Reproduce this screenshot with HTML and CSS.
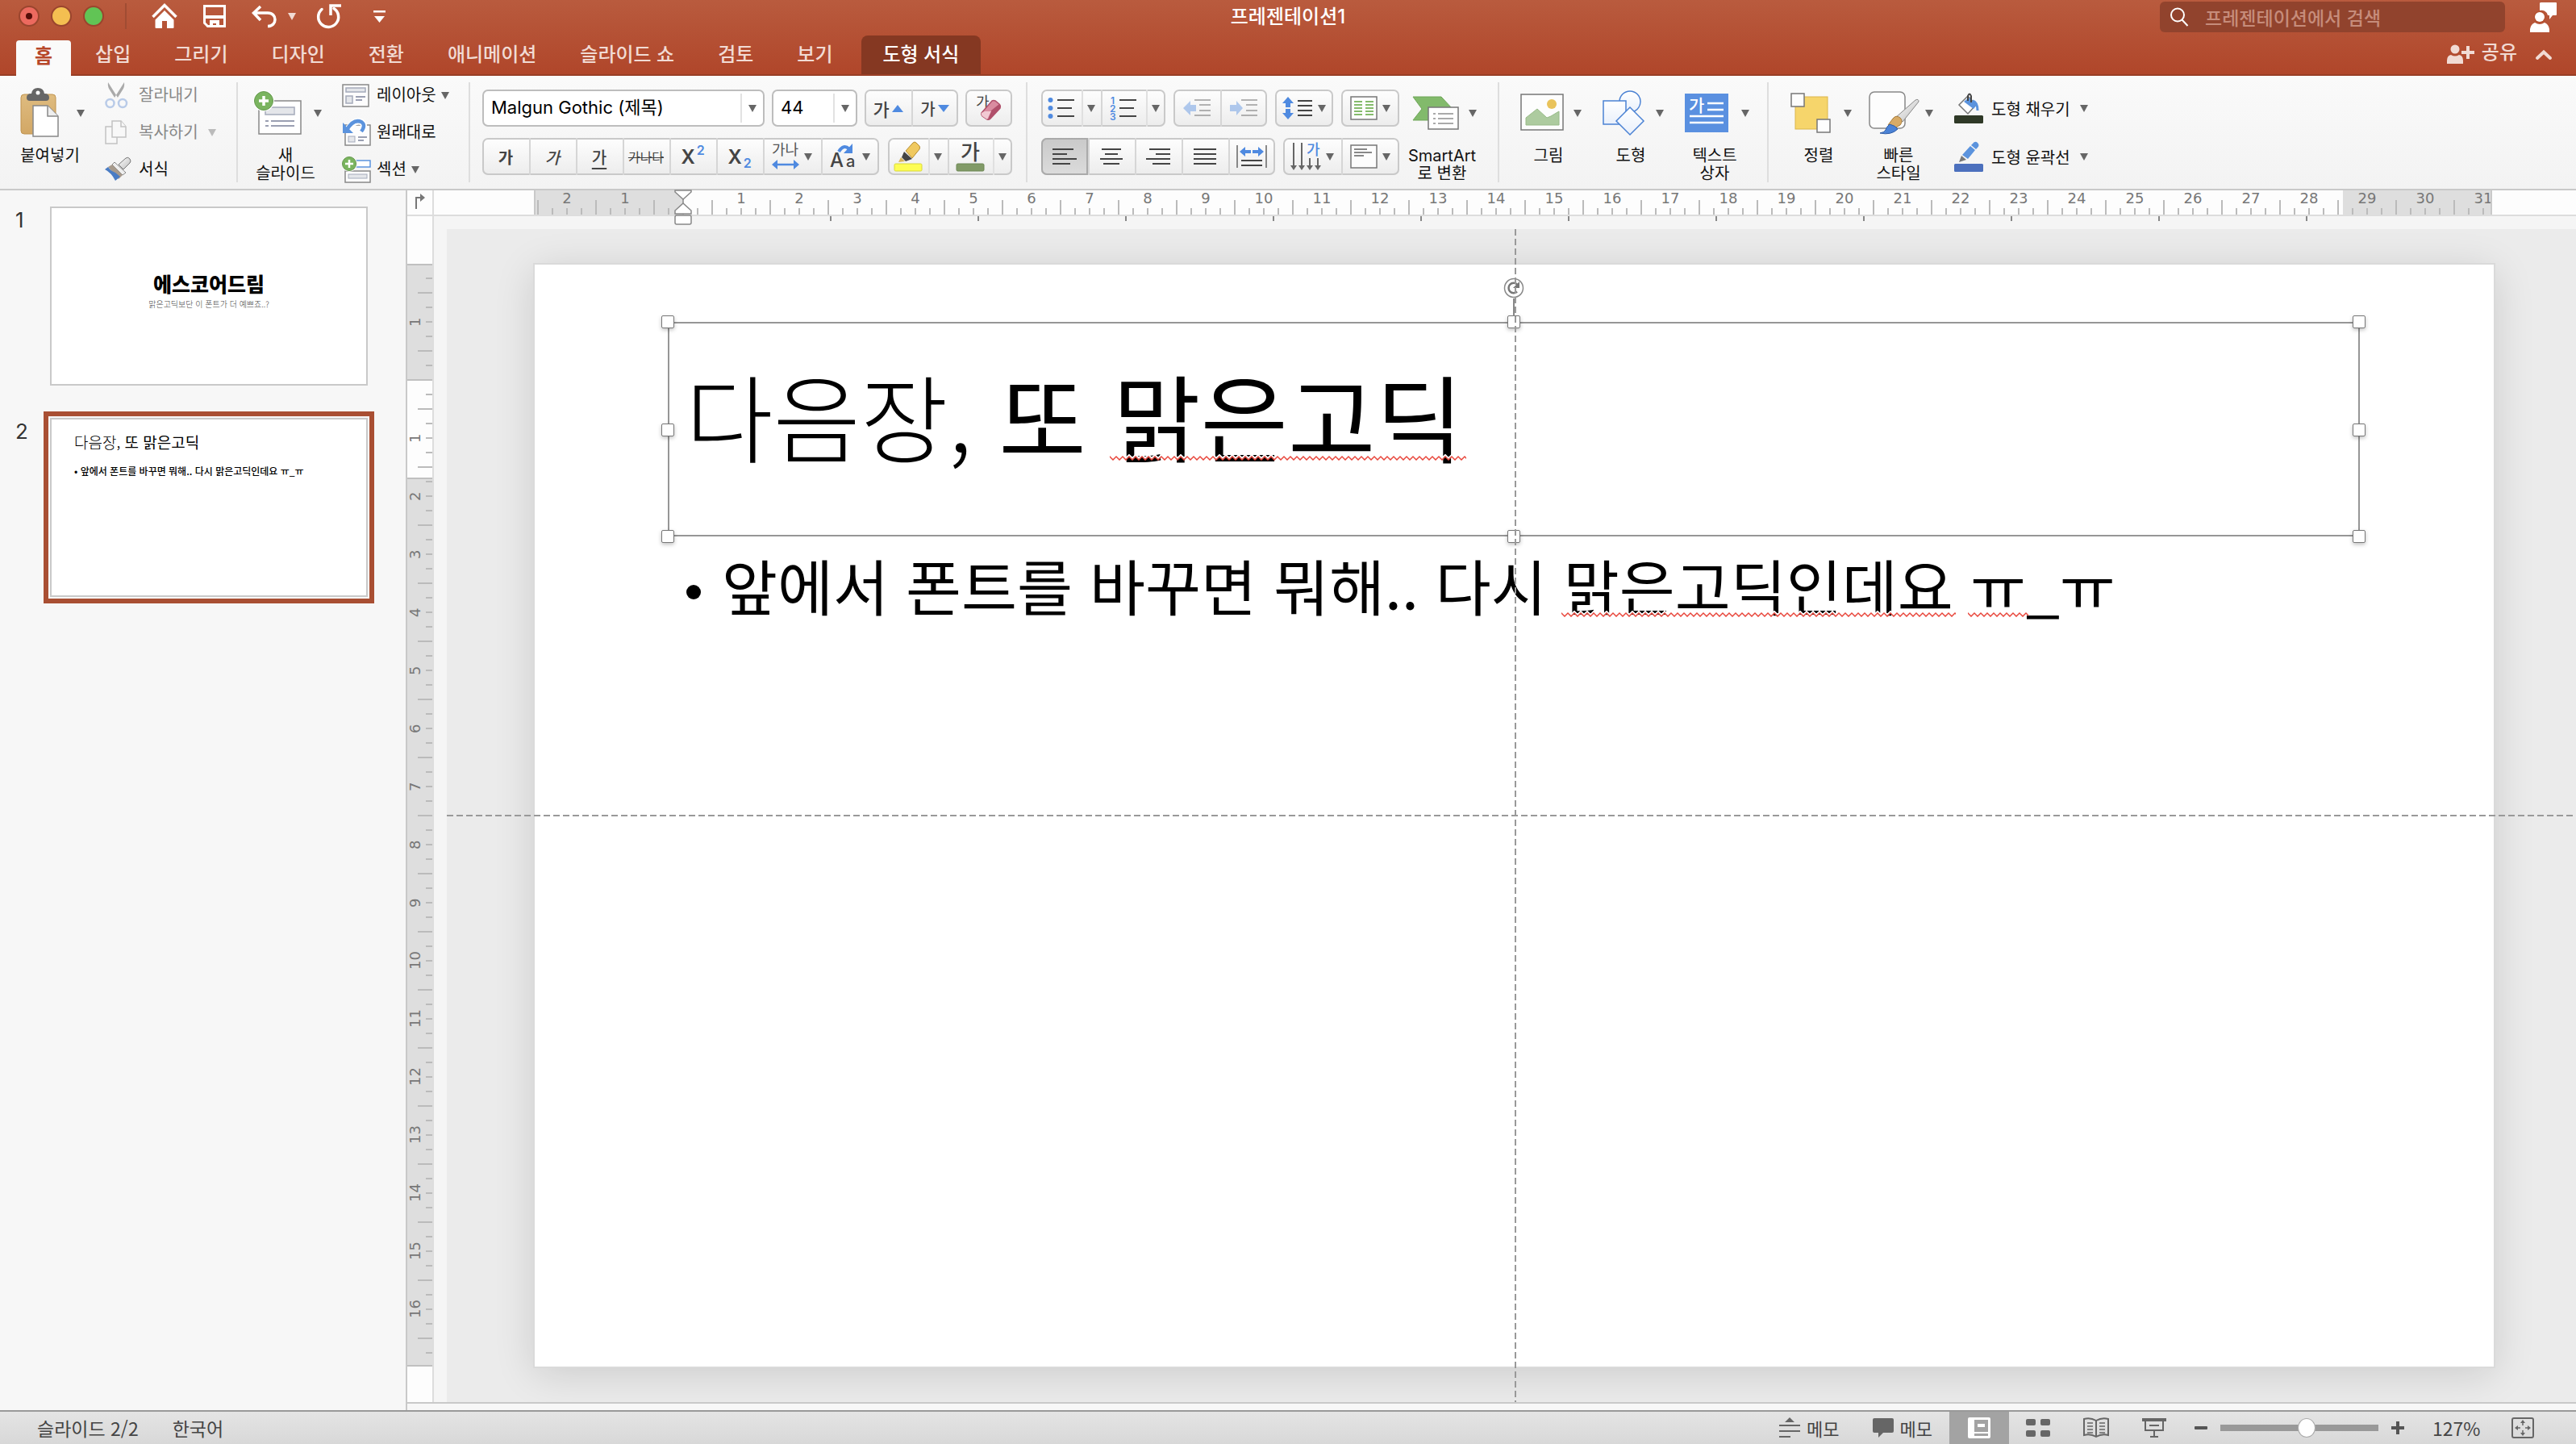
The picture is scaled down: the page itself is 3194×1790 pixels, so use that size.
FILE: index.html
```html
<!DOCTYPE html>
<html lang="ko">
<head>
<meta charset="utf-8">
<title>프레젠테이션1</title>
<link rel="stylesheet" href="styles.css">
</head>
<body>
<svg class="defs" aria-hidden="true">
  <defs>
    <symbol id="caret" viewBox="0 0 10 9"><path d="M0 0h10L5 9z" fill="currentColor"/></symbol>
    <linearGradient id="shapeFill" x1="0" y1="0" x2="0" y2="1"><stop offset="0" stop-color="#fff"/><stop offset="1" stop-color="#e9f0fb"/></linearGradient>
    <linearGradient id="boardFill" x1="0" y1="0" x2="0" y2="1"><stop offset="0" stop-color="#dfbc80"/><stop offset="1" stop-color="#d2a765"/></linearGradient>
    <linearGradient id="metal" x1="0" y1="0" x2="1" y2="1"><stop offset="0" stop-color="#fff"/><stop offset="1" stop-color="#bbb"/></linearGradient>
  </defs>
</svg>

<header class="top">
  <div class="titlebar">
    <div class="lights">
      <button class="light red" aria-label="닫기"></button>
      <button class="light yellow" aria-label="최소화"></button>
      <button class="light green" aria-label="확대"></button>
    </div>
    <div class="quick">
      <button aria-label="홈"><svg width="32" height="32" viewBox="0 0 32 32"><path d="M1.500 17L16 2.500 30.500 17" fill="none" stroke="#fff" stroke-width="3.500"/><path d="M16 9L4.500 20.500V30q0 1 1 1H13V22h6v9h7.500q1 0 1-1V20.500z" fill="#fff"/></svg></button>
      <button aria-label="저장"><svg width="28" height="28" viewBox="0 0 28 28"><path d="M1.500 1.500h25v25h-21l-4-4z" fill="none" stroke="#fff" stroke-width="3"/><path d="M1 13h26v4H1z" fill="#fff"/><path d="M8 28v-9h12v9h-4v-5h-4v5z" fill="#fff"/></svg></button>
      <button aria-label="실행 취소" class="undo"><svg width="31" height="28" viewBox="0 0 31 28"><path d="M11 2L2.500 10l8.500 9M3 10h17c12 0 12 16.500 0 16.500" fill="none" stroke="#fff" stroke-width="3.500"/></svg><svg class="caret" width="10" height="9"><use href="#caret"/></svg></button>
      <button aria-label="다시 실행"><svg width="30" height="30" viewBox="0 0 30 30"><path d="M6 6.500A12.500 12.500 0 1 0 21 5.500" fill="none" stroke="#fff" stroke-width="3.500" stroke-linecap="round"/><path d="M17 14V2h13" fill="none" stroke="#fff" stroke-width="3.500"/></svg></button>
      <button aria-label="도구 모음 사용자 지정"><svg width="15" height="15" viewBox="0 0 15 15"><path d="M0 0h15v2.500H0zM1 7h13l-6.500 8z" fill="#fff"/></svg></button>
    </div>
    <h1>프레젠테이션1</h1>
    <div class="right">
      <label class="search">
        <svg width="24" height="24" viewBox="0 0 24 24" fill="none" stroke="#fff" stroke-width="2"><circle cx="10" cy="9.500" r="8"/><path d="M15.500 15.500L22.500 23"/></svg>
        <input type="text" placeholder="프레젠테이션에서 검색" aria-label="프레젠테이션에서 검색">
      </label>
      <button aria-label="의견"><svg width="36" height="37" viewBox="0 0 36 37" fill="#fff"><path d="M15 0h18q1 0 1 1v14q0 1-1 1h-4l-4 5v-5h-2a8 8 0 0 0-10-6V1q0-1 2-1z"/><circle cx="13" cy="18" r="7.500" fill="#b4502f"/><circle cx="13" cy="18" r="6"/><path d="M1 37v-4q1-6 6-8 6 4 12 0 5 2 6 8v4z"/></svg></button>
    </div>
  </div>
  <nav class="tabs">
    <a href="#" class="tab on">홈</a><a href="#" class="tab">삽입</a><a href="#" class="tab">그리기</a><a href="#" class="tab">디자인</a><a href="#" class="tab">전환</a><a href="#" class="tab">애니메이션</a><a href="#" class="tab">슬라이드 쇼</a><a href="#" class="tab">검토</a><a href="#" class="tab">보기</a><a href="#" class="tab context">도형 서식</a>
    <button class="share"><svg width="34" height="24" viewBox="0 0 34 24" fill="#f1dbd4"><circle cx="10" cy="6" r="5.500"/><path d="M0 24v-4q0-6 5-7 5 3 10 0 5 1 5 7v4zM24 2h4v6h6v4h-6v6h-4v-6h-6V8h6z"/></svg>공유</button>
    <button class="collapse" aria-label="리본 축소"><svg width="20" height="12" viewBox="0 0 20 12"><path d="M2 10l8-7.500 8 7.500" fill="none" stroke="#f1dbd4" stroke-width="4" stroke-linecap="round"/></svg></button>
  </nav>
</header>

<section class="ribbon">
  <div class="group g-clip">
    <button class="big w80">
      <span class="pic"><svg width="48" height="62" viewBox="0 0 48 62"><rect x="1" y="8" width="43" height="49" rx="4" fill="url(#boardFill)" stroke="#c09450"/><path d="M12 16q-4 0-4-4 0-5 6-5 1-7 8-7t8 7q6 0 6 5 0 4-4 4z" fill="#666"/><circle cx="22" cy="6" r="2.500" fill="#fff"/><path d="M16 22h18l13 13v25H16z" fill="#fff" stroke="#888" stroke-width="1.500"/><path d="M34 22v13h13" fill="#eee" stroke="#888" stroke-width="1.500"/></svg><svg class="caret" width="10" height="9"><use href="#caret"/></svg></span>
      <span class="lab">붙여넣기</span>
    </button>
    <div class="col w138">
      <button class="small off"><span class="ico"><svg width="28" height="32" viewBox="0 0 28 32"><path d="M4 0q-1 6 3 11l7 11 2-3zM24 0q1 6-3 11l-7 11-2-3z" fill="#aaa"/><circle cx="6.500" cy="26" r="5" fill="none" stroke="#b9cbe8" stroke-width="2.500"/><circle cx="22" cy="26" r="5" fill="none" stroke="#b9cbe8" stroke-width="2.500"/></svg></span>잘라내기</button>
      <button class="small off"><span class="ico"><svg width="28" height="30" viewBox="0 0 28 30" fill="#f8f8f8" stroke="#c2c2c2" stroke-width="1.500"><path d="M1 8h14v21H1z"/><path d="M9 1h11l6 7v13H9z"/><path d="M20 1v7h6"/></svg></span>복사하기<svg class="caret gap" width="10" height="9"><use href="#caret"/></svg></button>
      <button class="small"><span class="ico"><svg width="32" height="30" viewBox="0 0 32 30"><path d="M17 9l9-8q3-2 5 1t0 5l-8 8z" fill="url(#metal)" stroke="#777"/><path d="M12 6l14 13-4 3L9 9z" fill="#eee" stroke="#888"/><path d="M9 9l13 13-5 5L4 12z" fill="#a79a8c"/><path d="M4 12l-4 3q8 4 13 14l6-5-6-5q-6-2-9-7z" fill="#4a7cc4"/></svg></span>서식</button>
    </div>
  </div>

  <div class="group g-slides">
    <button class="big w84">
      <span class="pic"><svg width="59" height="54" viewBox="0 0 59 54"><rect x="6" y="12" width="52" height="41" fill="#fff" stroke="#888" stroke-width="1.500"/><rect x="14" y="20" width="36" height="9" fill="#e4e6ea" stroke="#a5abbb" stroke-width="1.500"/><path d="M14 37h4M21 37h29M14 43h4M21 43h29" stroke="#9a9fb2" stroke-width="2"/><circle cx="12" cy="12" r="13" fill="#fff"/><circle cx="12" cy="12" r="11.500" fill="#7ab45f" stroke="#66994f"/><path d="M12 6v12M6 12h12" stroke="#fff" stroke-width="3.500"/></svg><svg class="caret" width="10" height="9"><use href="#caret"/></svg></span>
      <span class="lab">새<br>슬라이드</span>
    </button>
    <div class="col w132">
      <button class="small"><span class="ico wide"><svg width="34" height="29" viewBox="0 0 34 29" fill="#fdfdfd" stroke="#888" stroke-width="1.500"><rect x="1" y="1" width="32" height="27"/><g fill="#e4e6ea" stroke="#a5abbb"><rect x="5" y="5" width="24" height="5"/><rect x="5" y="15" width="8" height="9"/></g><path d="M17 16h12M17 20h8" stroke="#9a9fb2" stroke-width="2"/></svg></span>레이아웃<svg class="caret near" width="10" height="9"><use href="#caret"/></svg></button>
      <button class="small"><span class="ico wide"><svg width="36" height="34" viewBox="0 0 36 34"><rect x="4" y="8" width="31" height="25" fill="#fdfdfd" stroke="#888" stroke-width="1.500"/><rect x="8" y="22" width="8" height="7" fill="#e4e6ea" stroke="#a5abbb"/><path d="M20 23h11M20 27h7" stroke="#9a9fb2" stroke-width="2"/><path d="M1 5v13h13z" fill="#5b93dd"/><path d="M8 12q8-11 16-8 6 4 0 12" fill="none" stroke="#fff" stroke-width="8"/><path d="M6 14q8-14 18-10 6 4 0 12" fill="none" stroke="#5b93dd" stroke-width="4.500"/></svg></span>원래대로</button>
      <button class="small"><span class="ico wide"><svg width="36" height="33" viewBox="0 0 36 33"><rect x="12" y="5" width="23" height="8" fill="#fff" stroke="#5b93dd" stroke-width="1.500"/><rect x="4" y="18" width="31" height="14" fill="#fdfdfd" stroke="#888" stroke-width="1.500"/><rect x="8" y="22" width="23" height="5" fill="#e4e6ea" stroke="#a5abbb"/><circle cx="9" cy="9" r="10" fill="#f6f6f6"/><circle cx="9" cy="9" r="8.500" fill="#7ab45f" stroke="#66994f"/><path d="M9 4v10M4 9h10" stroke="#fff" stroke-width="2.500"/></svg></span>섹션<svg class="caret near" width="10" height="9"><use href="#caret"/></svg></button>
    </div>
  </div>

  <div class="group g-font">
    <div class="rows">
      <div class="row between">
        <label class="combo font-name"><select aria-label="글꼴"><option>Malgun Gothic (제목)</option></select><svg class="caret" width="10" height="9"><use href="#caret"/></svg></label>
        <label class="combo font-size"><select aria-label="글꼴 크기"><option>44</option></select><svg class="caret" width="10" height="9"><use href="#caret"/></svg></label>
        <div class="seg"><button class="w58 k22 tight">가<svg width="14" height="9" viewBox="0 0 14 9"><path d="M0 9h14L7 0z" fill="#4f8ae0"/></svg></button><button class="w58 k20 tight">가<svg width="14" height="9" viewBox="0 0 14 9"><path d="M0 0h14L7 9z" fill="#4f8ae0"/></svg></button></div>
        <div class="seg"><button class="w58" aria-label="서식 지우기"><svg width="32" height="36" viewBox="0 0 32 36"><text x="0" y="17" font-size="18" fill="#444">가</text><path d="M7 24L20 9q2-1 4 0l5 4q2 2 1 5L18 31q-2 2-4 1l-6-4q-2-2-1-4z" fill="#d98ca0" stroke="#b0506b" stroke-width="1.500"/><path d="M15 32l4-11 10-8q2 2 1 5L18 31z" fill="#b0506b"/><path d="M7 24l4-2 8 0-5 10-6-4q-2-2-1-4z" fill="#f2c9d3"/></svg></button></div>
      </div>
      <div class="row between">
        <div class="seg">
          <button class="w58 k20 b">가</button><button class="w58 k20 i">가</button><button class="w58 k20 u">가</button><button class="w58 k16 s">가나다</button><button class="w58 script">X<sup>2</sup></button><button class="w58 script">X<sub>2</sub></button>
          <button class="w72" aria-label="문자 간격"><svg width="34" height="34" viewBox="0 0 34 34"><text x="0" y="15" font-size="18" fill="#555">가나</text><path d="M5 27h24" stroke="#4f8ae0" stroke-width="2.500"/><path d="M7 21v12l-7-6zM27 21v12l7-6z" fill="#4f8ae0"/></svg><svg class="caret" width="10" height="9"><use href="#caret"/></svg></button><button class="w72" aria-label="대/소문자 바꾸기"><svg width="34" height="34" viewBox="0 0 34 34"><text x="0" y="30" font-size="24" font-weight="500" fill="#444">A</text><text x="20" y="30" font-size="20" font-weight="500" fill="#444">a</text><path d="M11 11q6-10 13-3" fill="none" stroke="#4f8ae0" stroke-width="4"/><path d="M28 1v12H17z" fill="#4f8ae0"/></svg><svg class="caret" width="10" height="9"><use href="#caret"/></svg></button>
        </div>
        <div class="seg">
          <button class="w50" aria-label="강조 색"><svg width="36" height="38" viewBox="0 0 36 38"><path d="M15 12L24 2q2-2 4 0l4 4q1 2 0 4l-9 11z" fill="#f0c95f" stroke="#b58d32"/><path d="M13 13l10 9-8 3-5-5z" fill="#444"/><path d="M9 20l5 5-8 1z" fill="#d9b45a"/><rect x="1" y="28" width="34" height="9" rx="1.500" fill="#fdfd54" stroke="#d8d83a"/></svg></button><button class="w24 slim" aria-label="강조 색 목록"><svg class="caret" width="10" height="9"><use href="#caret"/></svg></button><button class="w56" aria-label="글꼴 색"><svg width="36" height="38" viewBox="0 0 36 38"><text x="6" y="23" font-size="26" font-weight="500" fill="#444">가</text><rect x="1" y="28" width="34" height="9" rx="1.500" fill="#819a67" stroke="#6d8755"/></svg></button><button class="w24 slim" aria-label="글꼴 색 목록"><svg class="caret" width="10" height="9"><use href="#caret"/></svg></button>
        </div>
      </div>
    </div>
  </div>

  <div class="group g-para">
    <div class="rows">
      <div class="row">
        <div class="seg">
          <button class="w50" aria-label="글머리 기호"><svg width="34" height="28" viewBox="0 0 34 28"><g fill="#4f8ae0"><circle cx="3.500" cy="4" r="3"/><circle cx="3.500" cy="14" r="3"/><circle cx="3.500" cy="24" r="3"/></g><path d="M12 4h21M12 14h18M12 24h21" stroke="#444" stroke-width="2"/></svg></button><button class="w24 slim" aria-label="글머리 기호 목록"><svg class="caret" width="10" height="9"><use href="#caret"/></svg></button><button class="w56" aria-label="번호 매기기"><svg width="34" height="32" viewBox="0 0 34 32"><g fill="#4f8ae0" font-size="12" font-weight="600"><text x="1" y="11">1</text><text x="0" y="21">2</text><text x="0" y="31">3</text></g><path d="M12 6h21M12 16h18M12 26h21" stroke="#444" stroke-width="2"/></svg></button><button class="w24 slim" aria-label="번호 목록"><svg class="caret" width="10" height="9"><use href="#caret"/></svg></button>
        </div>
        <div class="seg"><button class="w58 dim" aria-label="내어쓰기"><svg width="34" height="22" viewBox="0 0 34 22"><path d="M0 11l9-9v5h7v8H9v5z" fill="#4f8ae0"/><path d="M14 1h20M20 7h14M20 14h14M14 20h20" stroke="#555" stroke-width="2"/></svg></button><button class="w58 dim" aria-label="들여쓰기"><svg width="34" height="22" viewBox="0 0 34 22"><path d="M16 11L8 2v5H0v8h8v5z" fill="#4f8ae0"/><path d="M14 1h20M20 7h14M20 14h14M14 20h20" stroke="#555" stroke-width="2"/></svg></button></div>
        <div class="seg"><button class="w72" aria-label="줄 간격"><svg width="38" height="30" viewBox="0 0 38 30"><path d="M7 1l7 8h-4v5H4V9H0zM7 29l7-8h-4v-5H4v5H0z" fill="#4f8ae0"/><path d="M19 6h18M19 12h18M19 18h18M19 24h18" stroke="#444" stroke-width="2"/></svg><svg class="caret" width="10" height="9"><use href="#caret"/></svg></button></div>
        <div class="seg"><button class="w72" aria-label="열"><svg width="34" height="30" viewBox="0 0 34 30"><rect x="1" y="1" width="32" height="28" fill="#fff" stroke="#777" stroke-width="1.500"/><path d="M5 7h10M5 11h10M5 15h10M5 19h10M5 23h10M19 7h10M19 11h10M19 15h10M19 19h10M19 23h10" stroke="#85bb6c" stroke-width="2"/></svg><svg class="caret" width="10" height="9"><use href="#caret"/></svg></button></div>
      </div>
      <div class="row">
        <div class="seg">
          <button class="w58 pressed" aria-label="왼쪽 맞춤"><svg width="30" height="22" viewBox="0 0 30 22"><path d="M0 2h26M0 8h18M0 14h30M0 20h22" stroke="#444" stroke-width="2"/></svg></button><button class="w58" aria-label="가운데 맞춤"><svg width="28" height="22" viewBox="0 0 28 22"><path d="M2 2h24M6 8h16M0 14h28M4 20h20" stroke="#444" stroke-width="2"/></svg></button><button class="w58" aria-label="오른쪽 맞춤"><svg width="30" height="22" viewBox="0 0 30 22"><path d="M4 2h26M12 8h18M0 14h30M8 20h22" stroke="#444" stroke-width="2"/></svg></button><button class="w58" aria-label="양쪽 맞춤"><svg width="28" height="22" viewBox="0 0 28 22"><path d="M0 2h28M0 8h28M0 14h28M0 20h28" stroke="#444" stroke-width="2"/></svg></button><button class="w58" aria-label="균등 분할"><svg width="38" height="28" viewBox="0 0 38 28"><path d="M1 0v28M37 0v28" stroke="#666" stroke-width="1.500"/><path d="M4 8l7-6v4h7v4h-7v4zM34 8l-7-6v4h-7v4h7v4z" fill="#4f8ae0"/><path d="M6 19h26M6 25h26" stroke="#444" stroke-width="2"/></svg></button>
        </div>
        <div class="seg">
          <button class="w72" aria-label="텍스트 방향"><svg width="38" height="34" viewBox="0 0 38 34"><path d="M4 0v30M14 0v30M24 19v11M34 19v11" stroke="#666" stroke-width="2"/><path d="M0 28h8l-4 6zM10 28h8l-4 6zM20 28h8l-4 6zM30 28h8l-4 6z" fill="#666"/><text x="20" y="15" font-size="18" font-weight="500" fill="#4f8ae0">가</text></svg><svg class="caret" width="10" height="9"><use href="#caret"/></svg></button><button class="w72" aria-label="텍스트 맞춤"><svg width="34" height="30" viewBox="0 0 34 30"><rect x="1" y="1" width="32" height="28" fill="#fdfdfd" stroke="#777" stroke-width="1.500"/><path d="M5 6h16M5 10h22M5 14h12" stroke="#888" stroke-width="2"/></svg><svg class="caret" width="10" height="9"><use href="#caret"/></svg></button>
        </div>
      </div>
    </div>
    <button class="big w80">
      <span class="pic"><svg width="58" height="42" viewBox="0 0 58 42"><path d="M1 1h35l14 15-12 14H1l11-14z" fill="#82ba6b" stroke="#6fa659"/><rect x="20" y="14" width="37" height="27" fill="#fff" stroke="#777" stroke-width="1.500"/><path d="M26 22h3M32 22h19M26 28h3M32 28h19M26 34h3M32 34h19" stroke="#aaa" stroke-width="2"/></svg><svg class="caret" width="10" height="9"><use href="#caret"/></svg></span>
      <span class="lab">SmartArt<br>로 변환</span>
    </button>
  </div>

  <div class="group g-insert">
    <button class="big w76">
      <span class="pic"><svg width="55" height="48" viewBox="0 0 55 48"><rect x="1" y="1" width="52" height="44" fill="#fdfdfd" stroke="#777" stroke-width="1.500"/><path d="M7 39V30l14-11 12 11 5-2 10-6v17z" fill="#adcb9f" stroke="#98bb88"/><circle cx="39" cy="13" r="6" fill="#e9c35b"/></svg><svg class="caret" width="10" height="9"><use href="#caret"/></svg></span>
      <span class="lab">그림</span>
    </button>
    <button class="big w76">
      <span class="pic"><svg width="52" height="56" viewBox="0 0 52 56" fill="url(#shapeFill)" stroke="#4b82d4" stroke-width="1.500"><circle cx="34" cy="14" r="13"/><rect x="1" y="13" width="28" height="29"/><path d="M34 21l17 17-17 17-17-17z"/></svg><svg class="caret" width="10" height="9"><use href="#caret"/></svg></span>
      <span class="lab">도형</span>
    </button>
    <button class="big w80">
      <span class="pic"><svg width="54" height="48" viewBox="0 0 54 48"><rect width="54" height="48" fill="#5a90e0"/><path d="M28 12h20M28 20h20M6 28h42M6 36h42" stroke="#fff" stroke-width="2.500"/><text x="5" y="22" font-size="21" font-weight="500" fill="#fff">가</text></svg><svg class="caret" width="10" height="9"><use href="#caret"/></svg></span>
      <span class="lab">텍스트<br>상자</span>
    </button>
  </div>

  <div class="group g-style">
    <button class="big w76">
      <span class="pic"><svg width="51" height="50" viewBox="0 0 51 50"><rect x="6" y="5" width="40" height="40" fill="#f6d56b" stroke="#dbb64c"/><g fill="#fdfdfd" stroke="#777" stroke-width="1.500"><rect x="1" y="1" width="16" height="16"/><rect x="33" y="33" width="16" height="16"/></g></svg><svg class="caret" width="10" height="9"><use href="#caret"/></svg></span>
      <span class="lab">정렬</span>
    </button>
    <button class="big w80">
      <span class="pic"><svg width="64" height="54" viewBox="0 0 64 54"><rect x="1" y="1" width="44" height="45" rx="6" fill="#fdfdfd" stroke="#888" stroke-width="1.500"/><path d="M33 33L58 11q4-2 4 2L42 38z" fill="url(#metal)" stroke="#888"/><path d="M30 34q4-5 9-1 4 4 0 9l-9 5-6-5z" fill="#d8ab66" stroke="#a77c3a"/><path d="M26 41q8 2 10 6-8 8-22 5 6-1 7-4 1-4 5-7z" fill="#4a82d6" stroke="#2e5ca6"/></svg><svg class="caret" width="10" height="9"><use href="#caret"/></svg></span>
      <span class="lab">빠른<br>스타일</span>
    </button>
    <div class="rows">
      <button class="shape-opt"><svg width="36" height="38" viewBox="0 0 36 38"><path d="M17 4L6 15l11 11 10-11z" fill="#fff" stroke="#777" stroke-width="1.500"/><path d="M12 11l12 9 4-5-10-9z" fill="#5b93dd"/><path d="M23 10q6 2 6 12" fill="none" stroke="#5b93dd" stroke-width="3"/><path d="M17 10V4q2-5 4 0v8" fill="none" stroke="#444" stroke-width="2"/><rect y="28" width="36" height="10" rx="1.500" fill="#2f3927"/></svg>도형 채우기<svg class="caret" width="10" height="9"><use href="#caret"/></svg></button>
      <button class="shape-opt"><svg width="36" height="38" viewBox="0 0 36 38"><path d="M23 3q3-4 6-1t0 6l-2 2-6-5zM20 6l6 5-9 11-7-5z" fill="#5b93dd"/><path d="M9 18l6 5-9 3z" fill="#777"/><rect y="28" width="36" height="10" rx="1.500" fill="#4c70bd"/></svg>도형 윤곽선<svg class="caret" width="10" height="9"><use href="#caret"/></svg></button>
    </div>
  </div>
</section>

<main class="work">
  <aside class="slides">
    <button class="entry"><span class="num">1</span><span class="frame"><span class="thumb first"><b>에스코어드림</b><small>맑은고딕보단 이 폰트가 더 예쁘죠..?</small></span></span></button>
    <button class="entry sel"><span class="num">2</span><span class="frame"><span class="thumb second"><span class="t">다음장, <em>또 맑은고딕</em></span><span class="b">• 앞에서 폰트를 바꾸면 뭐해.. 다시 맑은고딕인데요 ㅠ_ㅠ</span></span></span></button>
  </aside>

  <section class="editor">
    <div class="corner"><svg width="14" height="20" viewBox="0 0 14 20"><path d="M2 19V5h6" fill="none" stroke="#777" stroke-width="2"/><path d="M7 0l6 5-6 5z" fill="#777"/></svg></div>
    <div class="hruler">
      <ol class="hscale"><li>2</li><li>1</li><li></li><li>1</li><li>2</li><li>3</li><li>4</li><li>5</li><li>6</li><li>7</li><li>8</li><li>9</li><li>10</li><li>11</li><li>12</li><li>13</li><li>14</li><li>15</li><li>16</li><li>17</li><li>18</li><li>19</li><li>20</li><li>21</li><li>22</li><li>23</li><li>24</li><li>25</li><li>26</li><li>27</li><li>28</li><li>29</li><li>30</li><li>31</li></ol>
      <div class="stops"></div>
      <svg class="indent" width="22" height="44" viewBox="0 0 22 44" fill="#fff" stroke="#888" stroke-width="1.500"><path d="M11 10v8"/><path d="M1 0v2l10 9 10-9V0z"/><path d="M1 29v-4l10-9 10 9v4z"/><rect x="1" y="31" width="20" height="11" rx="2"/></svg>
    </div>
    <div class="vruler"><ol class="vscale"><li>1</li><li></li><li>1</li><li>2</li><li>3</li><li>4</li><li>5</li><li>6</li><li>7</li><li>8</li><li>9</li><li>10</li><li>11</li><li>12</li><li>13</li><li>14</li><li>15</li><li>16</li></ol></div>
    <div class="canvas">
      <div class="stage">
        <article class="slide">
          <div class="title-box">
            <h2>다음장, <em>또 <span class="miss">맑은고딕</span></em></h2>
            <i class="h tl"></i><i class="h tc"></i><i class="h tr"></i><i class="h ml"></i><i class="h mr"></i><i class="h bl"></i><i class="h bc"></i><i class="h br"></i>
            <i class="stem"></i>
            <svg class="rot" width="26" height="26" viewBox="0 0 26 26"><circle cx="13" cy="13" r="11.500" fill="#fff" stroke="#888" stroke-width="1.500"/><path d="M17 17.500a6.200 6.200 0 1 1 0-9" fill="none" stroke="#777" stroke-width="2.500"/><path d="M20 5v8h-8z" fill="#777"/></svg>
          </div>
          <ul class="body-box"><li>앞에서 폰트를 바꾸면 뭐해.. 다시 <span class="miss">맑은고딕인데요</span> <span class="miss">ㅠ</span>_ㅠ</li></ul>
        </article>
        <i class="guide-v"></i><i class="guide-h"></i>
      </div>
    </div>
    <div class="notes-edge"></div>
  </section>
</main>

<footer class="status">
  <span class="page">슬라이드 2/2</span><span>한국어</span>
  <div class="tools">
    <button class="st-note"><svg width="26" height="26" viewBox="0 0 26 26"><path d="M7 6h12l-6-6zM0 9h26v2H0zM0 16h26v2H0zM0 23h14v2H0z" fill="#666"/></svg>메모</button>
    <button class="st-note"><svg width="26" height="24" viewBox="0 0 26 24"><path d="M2 0h22q2 0 2 2v14q0 2-2 2H13l-6 6v-6H2q-2 0-2-2V2q0-2 2-2z" fill="#666"/></svg>메모</button>
    <button class="view on" aria-label="기본"><svg width="28" height="26" viewBox="0 0 28 26"><rect width="28" height="26" rx="2" fill="#fff"/><path d="M8 3h17v15H8zM8 20h17v3H8z" fill="#a3a3a3"/><path d="M12 8h9v4h-9z" fill="#fff"/></svg></button>
    <button class="view" aria-label="여러 슬라이드"><svg width="30" height="22" viewBox="0 0 30 22" fill="#666"><rect width="12" height="8" rx="2"/><rect x="18" width="12" height="8" rx="2"/><rect y="14" width="12" height="8" rx="2"/><rect x="18" y="14" width="12" height="8" rx="2"/></svg></button>
    <button class="view" aria-label="읽기용 보기"><svg width="32" height="26" viewBox="0 0 32 26" fill="none" stroke="#666" stroke-width="2"><path d="M1 2q8-2 15 2 7-4 15-2v20q-8-2-15 2-7-4-15-2zM16 4v20"/><path d="M5 7h7M5 11h7M5 15h7M5 19h7M20 7h7M20 11h7M20 15h7M20 19h7" stroke-width="1.500"/></svg></button>
    <button class="view" aria-label="슬라이드 쇼"><svg width="30" height="24" viewBox="0 0 30 24" fill="none" stroke="#666" stroke-width="2"><path d="M0 2h30" stroke-width="4"/><path d="M4 3v12h22V3M9 9h12M15 15v8M10 23h10"/></svg></button>
    <button class="zoom" aria-label="축소"><svg width="16" height="4"><rect width="16" height="4" rx="1" fill="#555"/></svg></button>
    <input type="range" min="0" max="100" value="55" aria-label="확대/축소">
    <button class="zoom" aria-label="확대"><svg width="16" height="16" viewBox="0 0 16 16"><path d="M6 0h4v6h6v4h-6v6H6v-6H0V6h6z" fill="#555"/></svg></button>
    <span class="pct">127%</span>
    <button class="fit" aria-label="창에 맞춤"><svg width="28" height="26" viewBox="0 0 28 26" fill="none" stroke="#666" stroke-width="2"><rect x="1" y="1" width="26" height="24" rx="2"/><path d="M14 10V6M14 16v4M11 13H6M17 13h5" stroke-width="1.500"/><path d="M11 7l3-4 3 4zM11 19l3 4 3-4zM8 10l-4 3 4 3zM20 10l4 3-4 3z" fill="#666" stroke="none"/></svg></button>
  </div>
</footer>
</body>
</html>
```
FILE: styles.css
```css
* { box-sizing: border-box; }
html, body { height: 100%; }
body {
  margin: 0;
  display: flex;
  flex-direction: column;
  font-family: Inter, "Noto Sans CJK KR", sans-serif;
  font-size: 20px;
  color: #111;
  background: #f5f5f5;
  overflow: hidden;
}
button {
  font: inherit;
  color: inherit;
  background: none;
  border: 0;
  padding: 0;
  margin: 0;
}
svg { display: block; flex: none; overflow: visible; }
ol, ul, h1, h2 { margin: 0; padding: 0; list-style: none; font-weight: 400; }
em { font-style: normal; }
.defs { position: absolute; width: 0; height: 0; }
.caret { color: #666; }

/* Window header */
.top {
  flex: none;
  height: 94px;
  display: flex;
  flex-direction: column;
  background: linear-gradient(#b95b3e, #b0462a);
  border-bottom: 2px solid #983e26;
}
.titlebar {
  height: 42px;
  display: grid;
  grid-template-columns: 1fr auto 1fr;
  align-items: center;
  position: relative;
}
.titlebar h1 { grid-column: 2; font-size: 24px; line-height: 40px; font-weight: 500; color: #fff; }
.lights {
  position: absolute;
  left: 23px;
  top: 4px;
  display: flex;
  gap: 14px;
  align-items: center;
  height: 32px;
  padding-right: 26px;
  border-right: 2px solid #a04c33;
}
.light { width: 26px; height: 26px; border-radius: 50%; border: 2px solid #9a452e; display: grid; place-items: center; }
.red { background: #ec6a5f; }
.red::after { content: ""; width: 8px; height: 8px; border-radius: 50%; background: #560d08; }
.yellow { background: #f4bf51; }
.green { background: #61c455; }
.quick { position: absolute; left: 188px; top: 4px; height: 32px; display: flex; align-items: center; gap: 32px; }
.undo { display: flex; align-items: center; gap: 14px; }
.undo .caret { color: #f1dbd4; }
.quick > :nth-child(4) { margin-left: -6px; }
.quick > :nth-child(5) { margin-left: 8px; }
.right { grid-column: 3; display: flex; justify-content: flex-end; gap: 30px; padding-right: 22px; }
.search {
  width: 428px;
  height: 38px;
  display: flex;
  align-items: center;
  gap: 20px;
  padding-left: 12px;
  border-radius: 6px;
  background: #91432d;
}
.search input { flex: 1; min-width: 0; border: 0; background: none; font: 500 23px "Noto Sans CJK KR", sans-serif; color: #fff; outline: 0; padding: 0; }
.search input::placeholder { color: #c68c7b; opacity: 1; }

.tabs { flex: 1; display: flex; align-items: flex-end; padding-left: 20px; }
.tab {
  height: 44px;
  padding: 0 27px;
  font-size: 24px;
  line-height: 40px;
  font-weight: 500;
  color: #f1dbd4;
  text-decoration: none;
}
.tab.on { padding: 0 23px; margin: 0 3px -2px 0; color: #b7472a; background: #fafafa; border-radius: 4px 4px 0 0; font-weight: 700; }
.tab.context { height: 48px; padding-top: 4px; background: #853822; color: #fff; border-radius: 8px 8px 0 0; margin-left: 8px; }
.share { height: 44px; margin-left: auto; display: flex; gap: 9px; font-size: 24px; font-weight: 500; line-height: 34px; color: #f1dbd4; }
.share svg { margin-top: 7px; }
.collapse { height: 44px; padding: 0 30px 0 23px; display: flex; align-items: flex-start; }
.collapse svg { margin-top: 14px; }

/* Ribbon */
.ribbon {
  flex: none;
  display: flex;
  height: 142px;
  padding: 8px 0;
  background: linear-gradient(#fafafa, #f3f3f3);
  border-bottom: 2px solid #c9c9c9;
}
.group { display: flex; flex: none; border-right: 2px solid #dedede; height: 124px; }
.group:last-child { border: 0; }
.g-clip { width: 295px; padding-left: 25px; gap: 25px; }
.g-slides { width: 288px; padding-left: 20px; gap: 25px; }
.g-font { width: 691px; padding-left: 15px; }
.g-para { width: 585px; padding-left: 17px; gap: 16px; }
.g-insert { width: 334px; padding-left: 26px; gap: 26px; }
.g-style { padding-left: 27px; gap: 21px; }
.big { display: flex; flex-direction: column; align-items: center; }
.pic { width: 100%; height: 76px; display: flex; align-items: center; justify-content: space-between; }
.lab { margin: 4px 6px 0 0; line-height: 22px; text-align: center; white-space: nowrap; }
.col { display: flex; flex-direction: column; gap: 14px; }
.small { height: 32px; display: flex; align-items: center; line-height: 32px; white-space: nowrap; }
.small.off { color: #888; }
.small.off .caret { color: #bbb; }
.ico { flex: none; width: 42px; display: flex; }
.ico.wide { width: 43px; }
.gap { margin-left: 12px; }
.near { margin-left: 6px; }
.w24 { width: 24px; } .w50 { width: 50px; } .w56 { width: 56px; } .w58 { width: 58px; } .w72 { width: 72px; }
.w76 { width: 76px; } .w80 { width: 80px; } .w84 { width: 84px; } .w132 { width: 133px; } .w138 { width: 138px; }

.rows { display: flex; flex-direction: column; gap: 14px; margin-top: 9px; }
.g-font .rows { width: 657px; }
.row { display: flex; gap: 10px; height: 46px; }
.between { justify-content: space-between; gap: 0; }
.seg {
  display: flex;
  border-radius: 7px;
  background: linear-gradient(#fefefe, #ececec);
  box-shadow: inset 0 0 0 2px #c9c9c9;
}
.seg button { height: 46px; display: flex; align-items: center; justify-content: center; gap: 6px; color: #444; }
.seg button + button { box-shadow: inset 2px 0 #d6d6d6; }
.seg button.slim { box-shadow: inset 2px 0 #e0e0e0; }
.pressed { background: linear-gradient(#c9c9c9, #dcdcdc); box-shadow: inset 0 0 0 2px #aaa; border-radius: 7px 0 0 7px; }
.seg button.tight { gap: 3px; }
.k22 { font-size: 22px; font-weight: 500; } .k20 { font-size: 20px; font-weight: 500; } .k16 { font-size: 16px; }
.seg .b { font-weight: 700; }
.i { font-style: italic; }
.u { text-decoration: underline; text-underline-offset: 5px; text-decoration-thickness: 2px; }
.s { text-decoration: line-through; }
.seg .script { font-size: 24px; font-weight: 600; gap: 2px; }
.script sup, .script sub { font-size: 16px; line-height: 16px; color: #4f8ae0; vertical-align: baseline; }
.script sup { margin-bottom: 16px; }
.script sub { margin-top: 16px; }
.dim svg { opacity: .42; }

.combo {
  display: flex;
  align-items: center;
  background: #fff;
  border: 2px solid #bdbdbd;
  border-radius: 7px;
  padding-right: 8px;
}
.combo select {
  appearance: none;
  flex: 1;
  min-width: 0;
  height: 36px;
  border: 0;
  border-right: 2px solid #e2e2e2;
  margin-right: 8px;
  padding: 0 0 2px 9px;
  background: none;
  font: inherit;
  font-size: 22px;
  color: #000;
}
.font-name { width: 350px; }
.font-size { width: 106px; }
.shape-opt { height: 46px; display: flex; align-items: center; gap: 10px; white-space: nowrap; margin-left: 5px; }
.shape-opt .caret { margin-left: 2px; }

/* Work area */
.work { flex: 1; min-height: 0; display: flex; }
.slides { flex: none; width: 505px; padding: 12px 0 0 19px; background: #f7f7f7; border-right: 2px solid #c9c9c9; }
.entry { display: flex; margin-bottom: 24px; text-align: left; }
.num { width: 35px; font-size: 26px; line-height: 32px; padding-top: 9px; color: #333; }
.frame { display: block; border: 6px solid #f7f7f7; padding: 2px; }
.entry.sel .frame { border-color: #a94f33; }
.thumb { display: block; width: 394px; height: 222px; background: #fff; border: 2px solid #c9c9c9; font-family: "Noto Sans CJK KR", sans-serif; color: #000; }
.first { text-align: center; padding-top: 75px; }
.first b { display: block; font-size: 25px; line-height: 36px; font-weight: 900; }
.first small { display: block; font-size: 10px; line-height: 16px; font-weight: 300; color: #444; }
.second { padding: 14px 0 0 28px; }
.second span { display: block; white-space: nowrap; }
.second .t { font-size: 19px; line-height: 28px; font-weight: 300; }
.second em { font-weight: 400; }
.second .b { font-size: 12px; line-height: 18px; margin-top: 13px; font-weight: 500; }

.editor { flex: 1; min-width: 0; display: grid; grid-template-columns: 33px minmax(0, 1fr); grid-template-rows: 32px minmax(0, 1fr) 10px; }
.corner { background: #fdfdfd; border-right: 2px solid #ddd; border-bottom: 2px solid #ddd; padding: 4px 0 0 9px; }
.hruler { position: relative; display: flex; background: #fdfdfd; border-bottom: 2px solid #ddd; padding: 0 104px 0 124px; z-index: 2; }
.hscale {
  flex: 1;
  min-width: 0;
  overflow: hidden;
  display: flex;
  padding-left: 3px;
  border-left: 2px solid #c9c9c9;
  border-right: 2px solid #c9c9c9;
  height: 30px;
  background:
    linear-gradient(to right, #bbb 2px, transparent 2px) 2px 100% / 72px 18px repeat-x,
    linear-gradient(to right, #bbb 2px, transparent 2px) 2px 100% / 18px 8px repeat-x,
    linear-gradient(#dedede, #dedede) 0 0 / 183px 100% no-repeat,
    linear-gradient(#dedede, #dedede) 100% 0 / 183px 100% no-repeat;
}
.hscale li { flex: none; width: 72px; text-align: center; font: 18px/20px "DejaVu Sans", sans-serif; color: #777; }
.stops {
  position: absolute;
  left: 491px;
  right: 330px;
  top: 32px;
  height: 6px;
  background: repeating-linear-gradient(to right, #888 0 2px, transparent 2px 183px);
}
.indent { position: absolute; left: 298px; top: 0; }
.vruler { background: #fdfdfd; border-right: 2px solid #ddd; padding-top: 59px; min-height: 0; }
.vscale {
  height: 1367px;
  overflow: hidden;
  padding-top: 36px;
  border-bottom: 2px solid #c0c0c0;
  background:
    linear-gradient(#c0c0c0, #c0c0c0) 0 0 / 100% 2px no-repeat,
    linear-gradient(#c0c0c0, #c0c0c0) 0 143px / 100% 2px no-repeat,
    linear-gradient(#c0c0c0, #c0c0c0) 0 265px / 100% 2px no-repeat,
    linear-gradient(#bbb 2px, transparent 2px) 100% 35px / 18px 72px repeat-y,
    linear-gradient(#bbb 2px, transparent 2px) 100% 17px / 8px 18px repeat-y,
    linear-gradient(#fdfdfd, #fdfdfd) 0 144px / 100% 122px no-repeat,
    #dedede;
}
.vscale li {
  height: 72px;
  width: 20px;
  display: grid;
  place-items: center;
  writing-mode: vertical-rl;
  transform: rotate(180deg);
  font: 18px/20px "DejaVu Sans", sans-serif;
  color: #777;
}
.canvas { padding: 16px 0 0 16px; background: #f5f5f5; min-height: 0; display: flex; }
.stage { position: relative; flex: 1; padding: 44px 102px 0 109px; background: #ebebeb; overflow: hidden; }
.slide {
  position: relative;
  width: 100%;
  aspect-ratio: 16 / 9;
  background: #fff;
  box-shadow: 0 0 0 2px #dadada, 0 8px 48px rgba(0, 0, 0, .14);
  font-family: "Noto Sans CJK KR", sans-serif;
  color: #000;
}
.title-box { position: absolute; left: 165px; right: 166px; top: 71px; height: 266px; border: 2px solid #969696; padding: 33px 0 0 20px; }
.title-box h2 { font-size: 118px; line-height: 160px; font-weight: 300; white-space: nowrap; }
.title-box em { font-weight: 400; }
.h { position: absolute; width: 16px; height: 16px; background: #fff; border: 1px solid #777; border-radius: 2px; box-shadow: 0 2px 5px rgba(0, 0, 0, .25); }
.tl, .tc, .tr { top: -10px; }
.ml, .mr { top: 124px; }
.bl, .bc, .br { bottom: -10px; }
.tl, .ml, .bl { left: -10px; }
.tc, .bc { left: calc(50% - 8px); }
.tr, .mr, .br { right: -9px; }
.stem { position: absolute; left: calc(50% - 1px); top: -31px; width: 2px; height: 22px; background: #888; }
.rot { position: absolute; left: calc(50% - 13px); top: -57px; }
.miss { position: relative; }
.miss::after {
  content: "";
  position: absolute;
  left: -4px;
  right: -4px;
  height: 8px;
  bottom: 28px;
  background: url("data:image/svg+xml,%3Csvg xmlns='http://www.w3.org/2000/svg' width='8' height='8'%3E%3Cpath d='M-4 5L0 1L4 5L8 1L12 5' fill='none' stroke='%23fff' stroke-width='2'/%3E%3Cpath d='M-4 7L0 3L4 7L8 3L12 7' fill='none' stroke='%23e8453a' stroke-width='1.500'/%3E%3C/svg%3E") repeat-x;
}
.body-box .miss::after { bottom: 14px; left: -3px; right: -3px; }
.body-box { position: absolute; left: 184px; top: 337px; font-size: 75px; line-height: 120px; white-space: nowrap; }
.body-box li { padding-left: 48px; }
.body-box li::before { content: ""; position: absolute; left: 4px; top: 60px; width: 18px; height: 18px; border-radius: 50%; background: #000; }
.guide-v { position: absolute; left: calc(50% + 4px); top: 0; bottom: 0; width: 2px; background: repeating-linear-gradient(#999 0 8px, transparent 8px 12px); }
.guide-h { position: absolute; top: 50%; left: 0; right: 0; height: 2px; margin-top: -1px; background: repeating-linear-gradient(to right, #999 0 8px, transparent 8px 12px); }
.notes-edge { grid-column: 1 / 3; border-top: 2px solid #c9c9c9; background: #f7f7f7; }

/* Status bar */
.status {
  flex: none;
  height: 42px;
  display: flex;
  align-items: center;
  padding: 0 52px 0 46px;
  gap: 42px;
  border-top: 2px solid #999;
  background: linear-gradient(#e4e4e4, #d8d8d8);
  font-size: 23px;
  color: #444;
  font-family: "Noto Sans CJK KR", sans-serif;
}
.tools { margin-left: auto; display: flex; align-items: center; height: 40px; font-size: 22px; }
.st-note { display: flex; align-items: center; gap: 8px; margin-right: 41px; }
.st-note + .view { margin-left: -20px; }
.view { width: 72px; height: 40px; display: grid; place-items: center; }
.view.on { width: 74px; background: #a3a3a3; }
.view:not(.on) + .zoom { margin-left: 14px; }
.tools input {
  appearance: none;
  width: 196px;
  height: 24px;
  margin: 0 16px 0 16px;
  background: linear-gradient(#999, #999) 0 50% / 100% 8px no-repeat;
}
.tools input::-webkit-slider-thumb { appearance: none; width: 22px; height: 24px; border-radius: 50%; background: #fff; border: 1px solid #aaa; }
.pct { width: 62px; margin: 0 36px 0 35px; font-size: 23px; }
```
